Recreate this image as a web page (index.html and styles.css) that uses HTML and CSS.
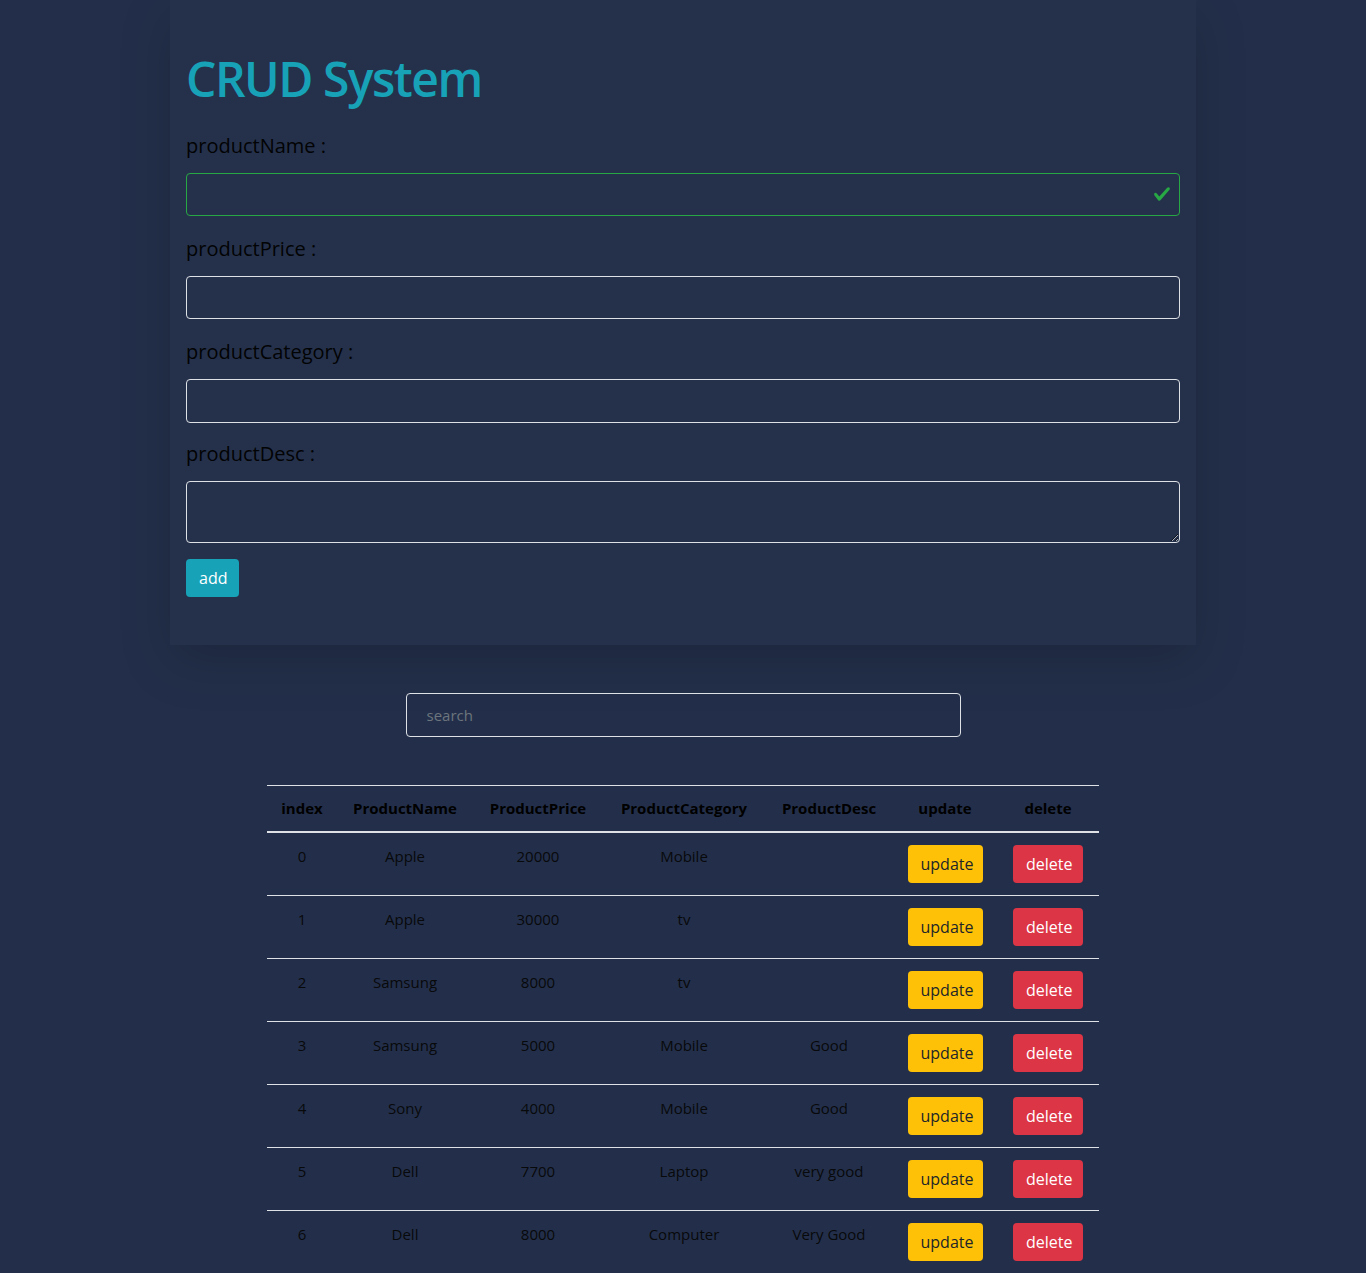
FILE: index.html
```html
<!DOCTYPE html>
<html lang="en">
<head>
<meta charset="utf-8">
<title>CRUD System</title>
<link rel="stylesheet" href="styles.css">
</head>
<body>
  <section class="panel">
    <h1 class="title">CRUD System</h1>
    <label class="field-label" for="pname">productName :</label>
    <div class="field-wrap">
      <input id="pname" class="field field-valid" type="text">
      <svg class="valid-icon" viewBox="0 0 8 8" width="18" height="18" aria-hidden="true"><path fill="#28a745" d="M2.3 6.73L.6 4.53c-.4-1.04.46-1.4 1.1-.8l1.1 1.4 3.4-3.8c.6-.63 1.6-.27 1.2.7l-4 4.6c-.43.5-.8.4-1.1.1z"/></svg>
    </div>
    <label class="field-label" for="pprice">productPrice :</label>
    <input id="pprice" class="field" type="text">
    <label class="field-label" for="pcat">productCategory :</label>
    <input id="pcat" class="field field-tight" type="text">
    <label class="field-label" for="pdesc">productDesc :</label>
    <textarea id="pdesc" class="field field-area"></textarea>
    <button class="btn btn-info">add</button>
  </section>

  <div class="search-row">
    <input class="search" type="text" placeholder="search">
  </div>

  <table class="products">
    <thead>
      <tr>
        <th class="c-index">index</th>
        <th class="c-name">ProductName</th>
        <th class="c-price">ProductPrice</th>
        <th class="c-cat">ProductCategory</th>
        <th class="c-desc">ProductDesc</th>
        <th class="c-upd">update</th>
        <th class="c-del">delete</th>
      </tr>
    </thead>
    <tbody>
      <tr><td>0</td><td>Apple</td><td>20000</td><td>Mobile</td><td></td><td><button class="btn btn-warning">update</button></td><td><button class="btn btn-danger">delete</button></td></tr>
      <tr><td>1</td><td>Apple</td><td>30000</td><td>tv</td><td></td><td><button class="btn btn-warning">update</button></td><td><button class="btn btn-danger">delete</button></td></tr>
      <tr><td>2</td><td>Samsung</td><td>8000</td><td>tv</td><td></td><td><button class="btn btn-warning">update</button></td><td><button class="btn btn-danger">delete</button></td></tr>
      <tr><td>3</td><td>Samsung</td><td>5000</td><td>Mobile</td><td>Good</td><td><button class="btn btn-warning">update</button></td><td><button class="btn btn-danger">delete</button></td></tr>
      <tr><td>4</td><td>Sony</td><td>4000</td><td>Mobile</td><td>Good</td><td><button class="btn btn-warning">update</button></td><td><button class="btn btn-danger">delete</button></td></tr>
      <tr><td>5</td><td>Dell</td><td>7700</td><td>Laptop</td><td>very good</td><td><button class="btn btn-warning">update</button></td><td><button class="btn btn-danger">delete</button></td></tr>
      <tr><td>6</td><td>Dell</td><td>8000</td><td>Computer</td><td>Very Good</td><td><button class="btn btn-warning">update</button></td><td><button class="btn btn-danger">delete</button></td></tr>
    </tbody>
  </table>
</body>
</html>
```

FILE: styles.css
```css
* { box-sizing: border-box; }

html, body {
  margin: 0;
  padding: 0;
}

body {
  background: #232f4a;
  font-family: "Open Sans", "Noto Sans", sans-serif;
  font-size: 16px;
  line-height: 1.5;
  color: #050608;
  padding-bottom: 40px;
}

.panel {
  width: 1026px;
  margin: 0 auto;
  padding: 50px 16px 48px;
  background: #25314b;
  box-shadow: 0 16px 48px rgba(0, 0, 0, 0.175);
}

.title {
  margin: 0 0 22px;
  font-size: 48px;
  line-height: 1.2;
  font-weight: 600;
  color: #17a2b8;
  letter-spacing: -1.5px;
}

.field-label {
  display: block;
  font-size: 20px;
  line-height: 30px;
  height: 31px;
  padding-top: 1px;
  margin-bottom: 12px;
  color: #020304;
}

.field-wrap {
  position: relative;
}

.field {
  display: block;
  width: 100%;
  height: 43px;
  margin: 0 0 17px;
  padding: 6px 12px;
  background: transparent;
  border: 1px solid #dee2e6;
  border-radius: 4px;
  font: inherit;
  color: #dee2e6;
  outline: none;
}

.field-valid {
  border-color: #28a745;
  padding-right: 40px;
}

.field-tight {
  height: 44px;
  margin-bottom: 15px;
}

.valid-icon {
  position: absolute;
  right: 9px;
  top: 12px;
}

.field-area {
  height: 62px;
  margin-bottom: 16px;
  resize: vertical;
}

.btn {
  display: inline-block;
  height: 38px;
  padding: 0 12px;
  border: 1px solid transparent;
  border-radius: 4px;
  font: inherit;
  font-size: 16px;
  line-height: 36px;
  cursor: pointer;
  text-align: center;
}

.btn-info {
  width: 53px;
  background: #17a2b8;
  color: #fff;
}

.btn-warning {
  width: 75px;
  background: #ffc107;
  color: #212529;
}

.btn-danger {
  width: 70px;
  background: #dc3545;
  color: #fff;
}

.search-row {
  display: flex;
  justify-content: center;
  margin-top: 48px;
}

.search {
  width: 555px;
  height: 44px;
  padding: 6px 20px;
  background: transparent;
  border: 1px solid #dee2e6;
  border-radius: 4px;
  font: inherit;
  font-size: 15px;
  color: #dee2e6;
  outline: none;
}

.search::placeholder {
  color: #6c757d;
}

.products {
  width: 832px;
  margin: 48px auto 0;
  border-collapse: collapse;
  text-align: center;
}

.products th {
  height: 47px;
  padding: 0 6px;
  border-top: 1px solid #dee2e6;
  border-bottom: 2px solid #dee2e6;
  font-size: 15px;
  font-weight: 700;
  color: #000;
  vertical-align: middle;
  white-space: nowrap;
}

.products td {
  padding: 11px 6px 13px;
  border-top: 1px solid #dee2e6;
  vertical-align: top;
  font-size: 15px;
  line-height: 24px;
  color: #08090b;
}

.products td:nth-child(n+6) {
  padding-top: 12px;
  padding-bottom: 12px;
}

.products tbody tr:first-child td {
  border-top: 0;
}

.c-index { width: 70px; }
.c-name { width: 136px; }
.c-price { width: 130px; }
.c-cat { width: 162px; }
.c-desc { width: 128px; }
.c-upd { width: 104px; }
.c-del { width: 102px; }
```
